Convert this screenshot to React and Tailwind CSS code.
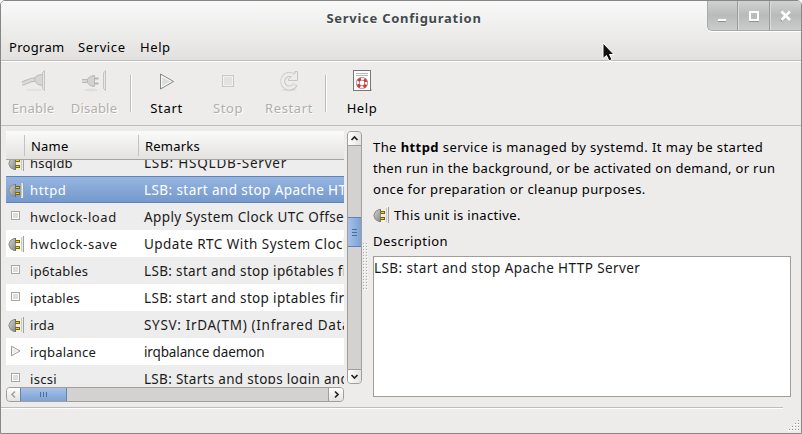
import React from 'react';

function PlugIcon() {
  return (
    <svg width="17" height="18" viewBox="0 0 17 18" className="shrink-0">
      <defs>
        <linearGradient id="plugBody" x1="0" y1="0" x2="1" y2="1">
          <stop offset="0" stopColor="#d3d5d1" />
          <stop offset="1" stopColor="#858883" />
        </linearGradient>
      </defs>
      <path d="M7.500 3.500H6Q1.500 4.500 0.800 9.500Q1.500 14.500 6 15.500H7.500Z" fill="url(#plugBody)" stroke="#8a8c88" />
      <path d="M7.500 3V8M7.500 11V16" stroke="#6c6f6a" strokeWidth="1" />
      <rect x="8" y="5" width="4" height="3" fill="#7d6200" />
      <rect x="8" y="6" width="3" height="1" fill="#f5d400" />
      <rect x="8" y="11" width="4" height="3" fill="#7d6200" />
      <rect x="8" y="12" width="3" height="1" fill="#f5d400" />
      <rect x="13" y="2" width="2" height="15" fill="#ececea" />
      <rect x="15" y="1" width="1" height="16" fill="#a0a29d" />
      <rect x="13" y="2" width="1" height="14" fill="#c9cbc7" />
    </svg>
  );
}

function SmallStop() {
  return (
    <svg width="17" height="18" viewBox="0 0 17 18" className="shrink-0">
      <rect x="3.500" y="3.500" width="8" height="8" fill="#dededc" stroke="#a5a7a3" />
      <rect x="4.500" y="4.500" width="6" height="6" fill="none" stroke="#fff" />
    </svg>
  );
}

function SmallPlay() {
  return (
    <svg width="17" height="18" viewBox="0 0 17 18" className="shrink-0">
      <path d="M3.500 3.200V12.800L12 8Z" fill="#e9e9e7" stroke="#9b9d99" />
      <path d="M4.700 5V11L10 8Z" fill="none" stroke="#fff" strokeWidth=".7" />
    </svg>
  );
}

function EnableIcon() {
  return (
    <svg width="24" height="24" viewBox="0 0 24 24">
      <ellipse cx="13" cy="22" rx="9" ry="1.300" fill="#e3e2e1" />
      <path d="M1 15.500C5 15 8 11.500 14 11.500" stroke="#b9b9b7" strokeWidth="4.500" fill="none" />
      <path d="M1 15.500C5 15 8 11.500 14 11.500" stroke="#d9d9d7" strokeWidth="2.500" fill="none" />
      <path d="M14 9.500Q16 6.500 21.500 6.500V17.500Q16 17.500 14 13.500Z" fill="#d6d6d4" stroke="#bababa" />
      <path d="M21.500 5L23.500 2.500V22.500L21.500 20.500Z" fill="#e7e7e5" stroke="#c3c3c1" />
    </svg>
  );
}

function DisableIcon() {
  return (
    <svg width="24" height="24" viewBox="0 0 24 24">
      <ellipse cx="9" cy="22" rx="7" ry="1.500" fill="#dfdedd" />
      <path d="M0 13H7" stroke="#b9b9b7" strokeWidth="4" />
      <path d="M0 13H7" stroke="#d6d6d4" strokeWidth="2" />
      <path d="M5.500 11Q8 7.500 12.500 7.500V18.500Q8 18.500 5.500 15Z" fill="#d2d2d0" stroke="#b8b8b6" />
      <path d="M13 10.500H16.500M13 15.500H16.500" stroke="#b5b5b3" strokeWidth="2" />
      <path d="M21.500 5L23.500 2.500V22.500L21.500 20.500Z" fill="#e7e7e5" stroke="#c3c3c1" />
    </svg>
  );
}

function StartIcon() {
  return (
    <svg width="24" height="24" viewBox="0 0 24 24">
      <path d="M5.500 6V21L18.500 13.500Z" fill="#dcdedb" stroke="#858783" strokeLinejoin="round" />
      <path d="M6.700 8V19L16.300 13.500Z" fill="none" stroke="#fff" />
    </svg>
  );
}

function StopIcon() {
  return (
    <svg width="24" height="24" viewBox="0 0 24 24">
      <rect x="6.500" y="7.500" width="11" height="11" fill="#e2e2e0" stroke="#c8c8c6" />
      <rect x="7.500" y="8.500" width="9" height="9" fill="none" stroke="#f1f1f0" />
    </svg>
  );
}

function RestartIcon() {
  return (
    <svg width="24" height="24" viewBox="0 0 24 24">
      <ellipse cx="12" cy="22" rx="8" ry="1.200" fill="#dddcdb" />
      <path d="M18.500 16.500A6.800 6.800 0 1 1 16.500 7.700" fill="none" stroke="#c6c6c4" strokeWidth="5" />
      <path d="M20.500 3.500V12.500H11.500V11L14.500 8.500L18 5.500V3.500Z" fill="#ebebe9" stroke="#c6c6c4" />
      <path d="M18 17A6.800 6.800 0 1 1 17 8.300" fill="none" stroke="#ebebe9" strokeWidth="3.200" />
    </svg>
  );
}

function HelpIcon() {
  return (
    <svg width="24" height="24" viewBox="0 0 24 24">
      <rect x="3" y="21" width="19" height="2" fill="#c6c5c4" />
      <rect x="3.500" y="2.500" width="17" height="20" fill="#fff" stroke="#777975" />
      <path d="M6 5.500H18M6 7.500H18" stroke="#b9bbb7" />
      <circle cx="12" cy="15" r="4.200" fill="none" stroke="#777" strokeWidth="3.600" />
      <circle cx="12" cy="15" r="4.200" fill="none" stroke="#f4f4f4" strokeWidth="2.400" />
      <circle cx="12" cy="15" r="4.200" fill="none" stroke="#e33030" strokeWidth="2.700" strokeDasharray="3.300 3.297" strokeDashoffset="-1.650" />
    </svg>
  );
}

function Tool({ icon, label, disabled, className }) {
  return (
    <div className={`flex flex-col items-center ${className}`}>
      {icon}
      <span className={`mt-[6px] whitespace-nowrap leading-[20px] ${disabled ? 'text-[#b0afad] [text-shadow:1px_1px_0_#fff]' : 'text-black'}`}>{label}</span>
    </div>
  );
}

const ToolDivider = () => <div className="mt-[7px] h-[37px] w-[2px] border-l border-r border-l-[#bfbdbb] border-r-white" />;

const rows = [
  ['plug', 'hsqldb', 'LSB: HSQLDB-Server', 'tracking-[0.2px]', 'tracking-[0.78px]'],
  ['plug', 'httpd', 'LSB: start and stop Apache HTTP Server', 'tracking-[0.6px]', 'tracking-[0.42px]'],
  ['stop', 'hwclock-load', 'Apply System Clock UTC Offset', 'tracking-[0.6px]', 'tracking-[0.4px]'],
  ['plug', 'hwclock-save', 'Update RTC With System Clock', 'tracking-[0.6px]', 'tracking-[0.46px]'],
  ['stop', 'ip6tables', 'LSB: start and stop ip6tables firewall', 'tracking-[0.3px]', 'tracking-[0.34px]'],
  ['stop', 'iptables', 'LSB: start and stop iptables firewall', 'tracking-[0.2px]', 'tracking-[0.34px]'],
  ['plug', 'irda', 'SYSV: IrDA(TM) (Infrared Data Association)', 'tracking-[0.2px]', 'tracking-[0.68px]'],
  ['play', 'irqbalance', 'irqbalance daemon', 'tracking-[0.2px]', 'tracking-[-0.13px]'],
  ['stop', 'iscsi', 'LSB: Starts and stops login and scanning', 'tracking-[0.3px]', 'tracking-[0.3px]'],
];

const icons = { plug: <PlugIcon />, stop: <SmallStop />, play: <SmallPlay /> };

function Row({ row, index }) {
  const selected = index === 1;
  const bg = selected
    ? 'border-y border-[#5d83b8] bg-linear-to-b from-[#97b5e0] to-[#7499cd] text-white'
    : index % 2 ? 'bg-white text-[#1a1a1a]' : 'bg-[#ededed] text-[#1a1a1a]';
  return (
    <div className={`flex h-[27px] shrink-0 items-center pl-[2px] ${bg}`}>
      {icons[row[0]]}
      <span className={`ml-[5px] w-[114px] shrink-0 whitespace-nowrap pt-px ${row[3]}`}>{row[1]}</span>
      <span className={`whitespace-nowrap pt-px text-[13.5px] leading-[20px] ${row[4]}`}>{row[2]}</span>
    </div>
  );
}

function Chevron({ d, color = '#222' }) {
  return (
    <svg width="13" height="13" viewBox="0 0 13 13">
      <path d={d} fill="none" stroke={color} strokeWidth="1.700" />
    </svg>
  );
}

function TitleBar() {
  return (
    <div className="h-[60px] border-b border-[#bfbcba] bg-linear-to-b from-[#f9f9f9] to-[#e2e1df]">
      <div className="flex h-[30px]">
        <div className="w-[706px] pl-[100px] pt-[6px] text-center font-bold leading-[22px] text-[#434a4d] [text-shadow:0_1px_0_#fff]">
          <span className="tracking-[0.73px]">Service Configuration</span>
        </div>
        <div className="flex h-[30px] w-[94px] shrink-0 overflow-hidden rounded-bl-[5px] border-b border-l border-[#a9abaa] bg-linear-to-b from-[#d0d2d1] via-[#b8bbba] to-[#cbcdcc] shadow-[0_1px_0_#fff]">
          <svg width="93" height="29" viewBox="1 0 93 29">
            <path d="M30.500 0V29M62.500 0V29" stroke="#9b9d9c" />
            <path d="M31.500 0V29M63.500 0V29" stroke="#d9dbda" />
            <g stroke="#8f9291" fill="none">
              <path d="M11 20.500H19" strokeWidth="1" />
              <path d="M42 20.500H52" />
              <path d="M74 20L83 11" strokeWidth="2.500" />
            </g>
            <path d="M11 19H19" stroke="#fff" strokeWidth="2" />
            <rect x="43" y="11" width="8" height="8" fill="none" stroke="#fff" strokeWidth="2" />
            <path d="M74.500 10.500L83 19M83 10.500L74.500 19" stroke="#fff" strokeWidth="2.700" />
          </svg>
        </div>
      </div>
      <div className="flex h-[29px] pl-[8px] pt-[6px] leading-[20px] text-black">
        <span className="w-[69px] tracking-[0.3px]">Program</span>
        <span className="w-[62px] tracking-[0.6px]">Service</span>
        <span className="tracking-[0.6px]">Help</span>
      </div>
    </div>
  );
}

function ServiceList() {
  return (
    <div className="flex h-[271px] w-[338px] flex-col">
      <div className="flex h-[253px] flex-col overflow-hidden">
        <div className="flex h-[29px] shrink-0 items-center border-b border-[#a6a5a0] bg-linear-to-b from-[#fbfbfb] to-[#e3e2e0] text-black">
          <div className="h-[21px] w-[19px] border-r border-[#c4c2c0]" />
          <div className="flex h-[21px] w-[114px] items-center border-r border-[#c4c2c0] pl-[6px] pt-[2px]">Name</div>
          <div className="pl-[6px] pt-[2px]">Remarks</div>
        </div>
        <div className="flex h-[224px] flex-col overflow-hidden">
          <div className="-mt-[11px] flex flex-col">
            {rows.map((r, i) => <Row key={r[1]} row={r} index={i} />)}
          </div>
        </div>
      </div>
      <div className="mt-[3px] flex h-[15px] shrink-0 overflow-hidden rounded-[4px] border border-[#a19f9d] bg-[#d3d2d0]">
        <div className="flex w-[13px] items-center justify-center bg-linear-to-b from-white to-[#e2e2e0]"><Chevron d="M8 3.500L5 6.500L8 9.500" color="#a5a4a2" /></div>
        <div className="-my-px flex w-[47px] items-center justify-center gap-[2px] border border-[#5d83b8] bg-linear-to-b from-[#a6c1e8] to-[#7da2d4]">
          <i className="h-[5px] w-px bg-[#486c9f]" /><i className="h-[5px] w-px bg-[#486c9f]" /><i className="h-[5px] w-px bg-[#486c9f]" />
        </div>
        <div className="ml-auto flex w-[15px] items-center justify-center border-l border-[#a19f9d] bg-linear-to-b from-white to-[#e2e2e0]"><Chevron d="M5 3.500L8 6.500L5 9.500" /></div>
      </div>
    </div>
  );
}

function VerticalScrollbar() {
  return (
    <div className="ml-[3px] flex h-[253px] w-[15px] shrink-0 flex-col items-stretch overflow-hidden rounded-[4px] border border-[#a19f9d] bg-[#d3d2d0]">
      <div className="flex h-[14px] shrink-0 items-center justify-center border-b border-[#a19f9d] bg-linear-to-r from-white to-[#e2e2e0]"><Chevron d="M3.500 8L6.500 5L9.500 8" /></div>
      <div className="-mx-px mt-[71px] flex h-[30px] shrink-0 flex-col items-center justify-center gap-[2px] border border-[#5d83b8] bg-linear-to-r from-[#a6c1e8] to-[#7da2d4]">
        <i className="h-px w-[5px] bg-[#486c9f]" /><i className="h-px w-[5px] bg-[#486c9f]" /><i className="h-px w-[5px] bg-[#486c9f]" />
      </div>
      <div className="mt-auto flex h-[14px] shrink-0 items-center justify-center border-t border-[#a19f9d] bg-linear-to-r from-white to-[#e2e2e0]"><Chevron d="M3.500 5L6.500 8L9.500 5" /></div>
    </div>
  );
}

function PaneGrip() {
  return (
    <svg width="6" height="48" viewBox="0 0 6 48" className="mt-[112px] shrink-0">
      {Array.from({ length: 16 }, (_, i) => (
        <g key={i}>
          <rect x="1" y={i * 3} width="1" height="1" fill="#a9a8a6" />
          <rect x="4" y={i * 3} width="1" height="1" fill="#a9a8a6" />
          <rect x="2" y={i * 3 + 1} width="1" height="1" fill="#fff" />
          <rect x="5" y={i * 3 + 1} width="1" height="1" fill="#fff" />
        </g>
      ))}
    </svg>
  );
}

function Details() {
  return (
    <div className="ml-[5px] flex w-[418px] flex-col text-black">
      <div className="mt-[6px] whitespace-nowrap leading-[21px]">
        <div className="tracking-[0.42px]">The <b>httpd</b> service is managed by systemd. It may be started</div>
        <div className="tracking-[0.3px]">then run in the background, or be activated on demand, or run</div>
        <div className="tracking-[0.35px]">once for preparation or cleanup purposes.</div>
      </div>
      <div className="mt-[5px] flex h-[20px] items-center">
        <PlugIcon />
        <span className="ml-[4px] tracking-[0.35px]">This unit is inactive.</span>
      </div>
      <div className="mt-[5px] leading-[22px] tracking-[0.47px]">Description</div>
      <div className="mt-[4px] h-[141px] border border-[#a19e9a] bg-white text-[13.5px] leading-[22px] tracking-[0.42px] text-[#1a1a1a]">
        LSB: start and stop Apache HTTP Server
      </div>
    </div>
  );
}

const gripDots = [[11, 1], [8, 4], [11, 4], [5, 7], [8, 7], [11, 7], [2, 10], [5, 10], [8, 10], [11, 10]];

export default function App() {
  return (
    <div className="h-[434px] w-[802px] bg-white">
      <div className="relative h-[434px] w-[802px] overflow-hidden rounded-t-[5px] border border-[#878787] bg-[#edeceb] font-['Noto_Sans','Open_Sans',sans-serif] text-[13px] leading-[20px] tracking-[0.2px]">
        <TitleBar />
        <div className="flex h-[65px] border-b border-t border-b-[#bfbdbb] border-t-white pt-[6px]">
          <Tool icon={<EnableIcon />} label="Enable" disabled className="w-[64px]" />
          <Tool icon={<DisableIcon />} label="Disable" disabled className="w-[58px]" />
          <div className="ml-[7px]"><ToolDivider /></div>
          <Tool icon={<StartIcon />} label="Start" className="w-[69px] tracking-[0.7px]" />
          <Tool icon={<StopIcon />} label="Stop" disabled className="w-[54px] tracking-[0.6px]" />
          <Tool icon={<RestartIcon />} label="Restart" disabled className="w-[68px] tracking-[0.6px]" />
          <div className="ml-[2px]"><ToolDivider /></div>
          <Tool icon={<HelpIcon />} label="Help" className="w-[70px] tracking-[0.6px]" />
        </div>
        <div className="flex h-[281px] pl-[5px] pt-[5px]">
          <ServiceList />
          <VerticalScrollbar />
          <PaneGrip />
          <Details />
        </div>
        <div className="h-[2px] w-[782px] border-b border-t border-b-white border-t-[#bfbdbb]" />
        <div className="flex h-[24px] items-end justify-end">
          <svg width="14" height="14" viewBox="0 0 14 14">
            {gripDots.map(([x, y]) => (
              <g key={`${x}-${y}`}>
                <rect x={x - 1} y={y + 1} width="2" height="1" fill="#fff" />
                <rect x={x} y={y} width="1" height="1" fill="#979593" />
              </g>
            ))}
          </svg>
        </div>
        <svg width="13" height="20" viewBox="0 0 13 20" className="absolute left-[601px] top-[41px]">
          <path d="M1 1V16.500L4.500 13.500L7 19L10 17.500L7.500 12.500H12Z" fill="#111" stroke="#fff" />
        </svg>
      </div>
    </div>
  );
}
